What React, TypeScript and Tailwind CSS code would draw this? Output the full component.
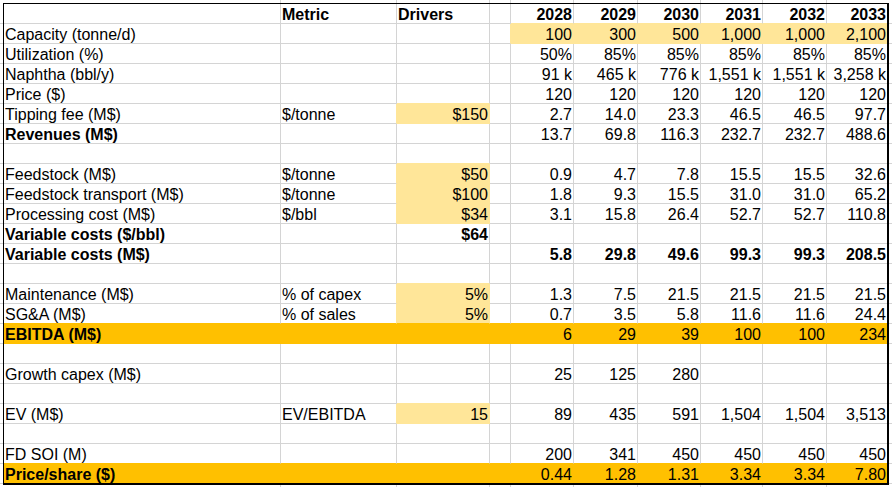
import React from "react";

type Fill = "y" | "o" | null;

type Row = {
  label: string;
  bold?: boolean;
  unit?: string;
  driver?: string;
  driverBold?: boolean;
  driverFill?: boolean;
  values: string[];
  valuesBold?: boolean;
  valuesFill?: boolean;
  rowFill?: boolean;
  header?: boolean;
};

const E: string[] = ["", "", "", "", "", ""];

const rows: Row[] = [
  { label: "", unit: "Metric", driver: "Drivers", header: true, values: ["2028", "2029", "2030", "2031", "2032", "2033"] },
  { label: "Capacity (tonne/d)", values: ["100", "300", "500", "1,000", "1,000", "2,100"], valuesFill: true },
  { label: "Utilization (%)", values: ["50%", "85%", "85%", "85%", "85%", "85%"] },
  { label: "Naphtha (bbl/y)", values: ["91 k", "465 k", "776 k", "1,551 k", "1,551 k", "3,258 k"] },
  { label: "Price ($)", values: ["120", "120", "120", "120", "120", "120"] },
  { label: "Tipping fee (M$)", unit: "$/tonne", driver: "$150", driverFill: true, values: ["2.7", "14.0", "23.3", "46.5", "46.5", "97.7"] },
  { label: "Revenues (M$)", bold: true, values: ["13.7", "69.8", "116.3", "232.7", "232.7", "488.6"] },
  { label: "", values: E },
  { label: "Feedstock (M$)", unit: "$/tonne", driver: "$50", driverFill: true, values: ["0.9", "4.7", "7.8", "15.5", "15.5", "32.6"] },
  { label: "Feedstock transport (M$)", unit: "$/tonne", driver: "$100", driverFill: true, values: ["1.8", "9.3", "15.5", "31.0", "31.0", "65.2"] },
  { label: "Processing cost (M$)", unit: "$/bbl", driver: "$34", driverFill: true, values: ["3.1", "15.8", "26.4", "52.7", "52.7", "110.8"] },
  { label: "Variable costs ($/bbl)", bold: true, driver: "$64", driverBold: true, values: E },
  { label: "Variable costs (M$)", bold: true, values: ["5.8", "29.8", "49.6", "99.3", "99.3", "208.5"], valuesBold: true },
  { label: "", values: E },
  { label: "Maintenance (M$)", unit: "% of capex", driver: "5%", driverFill: true, values: ["1.3", "7.5", "21.5", "21.5", "21.5", "21.5"] },
  { label: "SG&A (M$)", unit: "% of sales", driver: "5%", driverFill: true, values: ["0.7", "3.5", "5.8", "11.6", "11.6", "24.4"] },
  { label: "EBITDA (M$)", bold: true, rowFill: true, values: ["6", "29", "39", "100", "100", "234"] },
  { label: "", values: E },
  { label: "Growth capex (M$)", values: ["25", "125", "280", "", "", ""] },
  { label: "", values: E },
  { label: "EV (M$)", unit: "EV/EBITDA", driver: "15", driverFill: true, values: ["89", "435", "591", "1,504", "1,504", "3,513"] },
  { label: "", values: E },
  { label: "FD SOI (M)", values: ["200", "341", "450", "450", "450", "450"] },
  { label: "Price/share ($)", bold: true, rowFill: true, values: ["0.44", "1.28", "1.31", "3.34", "3.34", "7.80"] },
];

const W = [
  "w-[277px]",
  "w-[116px]",
  "w-[93px]",
  "w-[21px]",
  "w-[63px]",
  "w-[64px]",
  "w-[63px]",
  "w-[62px]",
  "w-[64px]",
  "w-[60px]",
];

const BG: Record<string, string> = { y: "bg-[#ffe699]", o: "bg-[#ffc000]", n: "bg-white" };
const BR: Record<string, string> = { y: "border-r-[#ffe699]", o: "border-r-[#ffc000]", n: "border-r-[#d4d4d4]" };
const BB: Record<string, string> = { y: "border-b-[#ffe699]", o: "border-b-[#ffc000]", n: "border-b-[#d4d4d4]" };

function fillOf(r: number, c: number): Fill {
  if (r < 0 || r >= rows.length || c < 0 || c > 9) return null;
  const row = rows[r];
  if (row.rowFill) return "o";
  if (c === 2 && row.driverFill) return "y";
  if (c >= 4 && row.valuesFill) return "y";
  return null;
}

type CellInfo = { text: string; bold: boolean; right: boolean };

function cellInfo(r: number, c: number): CellInfo {
  const row = rows[r];
  if (c === 0) return { text: row.label, bold: !!row.bold, right: false };
  if (c === 1) return { text: row.unit ?? "", bold: !!row.header, right: false };
  if (c === 2) return { text: row.driver ?? "", bold: !!row.header || !!row.driverBold, right: !row.header };
  if (c === 3) return { text: "", bold: false, right: false };
  return { text: row.values[c - 4], bold: !!row.header || !!row.valuesBold, right: true };
}

function Cell({ r, c }: { r: number; c: number }) {
  const f = fillOf(r, c) ?? "n";
  const lastRow = r === rows.length - 1;
  const lastCol = c === 9;
  const rightKey = fillOf(r, c + 1) ?? fillOf(r, c) ?? "n";
  const bottomKey = fillOf(r + 1, c) ?? fillOf(r, c) ?? "n";
  const info = cellInfo(r, c);
  const cls = [
    W[c],
    lastRow ? "h-[19px]" : "h-[20px] border-b",
    lastRow ? "" : BB[bottomKey],
    lastCol ? "" : "border-r " + BR[rightKey],
    BG[f],
    "flex items-end shrink-0",
    info.right ? "justify-end" : "justify-start",
  ].join(" ");
  return (
    <div className={cls}>
      <span
        className={
          "leading-[17px] whitespace-nowrap px-[1px] " + (info.bold ? "font-bold" : "font-normal")
        }
      >
        {info.text}
      </span>
    </div>
  );
}

function StubRow({ h }: { h: string }) {
  return (
    <div className={"flex " + h}>
      <div className="w-[4px] shrink-0" />
      {W.map((w, i) => (
        <div key={i} className={w + " shrink-0 " + (i < 9 ? "border-r border-r-[#d4d4d4]" : "")} />
      ))}
    </div>
  );
}

function StubCol() {
  return (
    <div className="w-[3px] flex flex-col pt-[1px]">
      {rows.map((_, i) => (
        <div key={i} className="h-[20px] border-b border-b-[#d4d4d4]" />
      ))}
    </div>
  );
}

export default function App() {
  return (
    <div
      className="w-[892px] h-[487px] bg-white text-black text-[16px] overflow-hidden"
      style={{ fontFamily: "'Liberation Sans', Arial, sans-serif" }}
    >
      <StubRow h="h-[3px]" />
      <div className="flex">
        <StubCol />
        <div className="border-l border-t border-r-2 border-b-2 border-black flex flex-col">
          {rows.map((_, r) => (
            <div key={r} className="flex">
              {W.map((_, c) => (
                <Cell key={c} r={r} c={c} />
              ))}
            </div>
          ))}
        </div>
        <StubCol />
      </div>
      <StubRow h="h-[2px]" />
    </div>
  );
}
